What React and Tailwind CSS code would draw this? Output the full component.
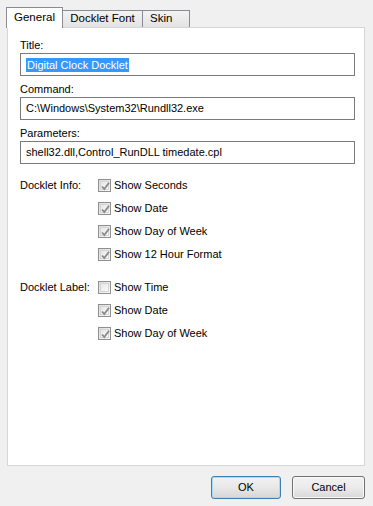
import React from "react";

const Check = ({ checked }) => (
  <span className="relative w-[13px] h-[13px] border border-[#8f8f8f] bg-gradient-to-br from-[#dcdcdc] to-[#fbfbfb] shrink-0">
    <span className="absolute inset-[1px] border border-[#d4d4d4] bg-gradient-to-br from-[#e6e6e6] to-[#fafafa]" />
    {checked && (
      <svg className="absolute left-[1px] top-[1px]" width="11" height="11" viewBox="0 0 11 11">
        <path d="M2 5.5 L4.3 8 L9 1.8" fill="none" stroke="#8a8a8a" strokeWidth="1.8" />
      </svg>
    )}
  </span>
);

const Row = ({ label, text, checked }) => (
  <div className="flex items-center h-[23px]">
    <div className="w-[78px] whitespace-nowrap">{label}</div>
    <Check checked={checked} />
    <span className="ml-[3px] whitespace-nowrap">{text}</span>
  </div>
);

const Field = ({ label, children }) => (
  <div className="mb-[6px]">
    <div className="h-[15px] leading-[15px]">{label}</div>
    <div className="h-[23px] border border-[#7a7a7a] bg-white flex items-center px-[5px] whitespace-nowrap">
      {children}
    </div>
  </div>
);

export default function App() {
  return (
    <div
      className="w-[373px] h-[506px] bg-[#f0f0f0] text-[11px] text-black overflow-hidden"
      style={{ fontFamily: "'Liberation Sans', Arial, sans-serif" }}
    >
      {/* Tabs */}
      <div className="flex items-end pl-[6px] pt-[7px] h-[28px] relative z-10">
        <div className="h-[21px] w-[57px] bg-white border border-b-0 border-[#898c95] flex items-center justify-center pb-[1px] text-[11.5px]">
          General
        </div>
        <div className="h-[17px] w-[81px] -ml-px mb-px bg-gradient-to-b from-[#f3f3f3] to-[#e3e3e3] border border-b-0 border-[#898c95] flex items-center justify-center text-[11.5px]">
          Docklet Font
        </div>
        <div className="h-[17px] w-[48px] -ml-px mb-px bg-gradient-to-b from-[#f3f3f3] to-[#e3e3e3] border border-b-0 border-[#898c95] flex items-center pl-[7px] text-[11.5px]">
          Skin
        </div>
      </div>

      {/* Panel */}
      <div className="ml-[7px] w-[358px] h-[439px] -mt-px bg-white border border-[#d6d6d6] pl-[12px] pr-[9px] pt-[10px]">
        <Field label="Title:">
          <span className="bg-[#3399ff] text-white leading-[14px] px-[1px]">Digital Clock Docklet</span>
        </Field>
        <Field label="Command:">C:\Windows\System32\Rundll32.exe</Field>
        <Field label="Parameters:">shell32.dll,Control_RunDLL timedate.cpl</Field>

        <div className="mt-[10px]">
          <Row label="Docklet Info:" text="Show Seconds" checked />
          <Row text="Show Date" checked />
          <Row text="Show Day of Week" checked />
          <Row text="Show 12 Hour Format" checked />
        </div>

        <div className="mt-[10px]">
          <Row label="Docklet Label:" text="Show Time" />
          <Row text="Show Date" checked />
          <Row text="Show Day of Week" checked />
        </div>
      </div>

      {/* Buttons */}
      <div className="flex justify-end gap-[11px] pr-[8px] mt-[10px]">
        <button className="w-[70px] h-[23px] rounded-[3px] border border-[#3c7fb1] bg-gradient-to-b from-[#f2f2f2] via-[#e8e8e8] to-[#d6d6d6] shadow-[inset_0_0_0_1px_#a8dbf5]">
          OK
        </button>
        <button className="w-[73px] h-[23px] rounded-[3px] border border-[#707070] bg-gradient-to-b from-[#f2f2f2] via-[#ebebeb] to-[#d8d8d8] shadow-[inset_0_0_0_1px_#fafafa]">
          Cancel
        </button>
      </div>
    </div>
  );
}
